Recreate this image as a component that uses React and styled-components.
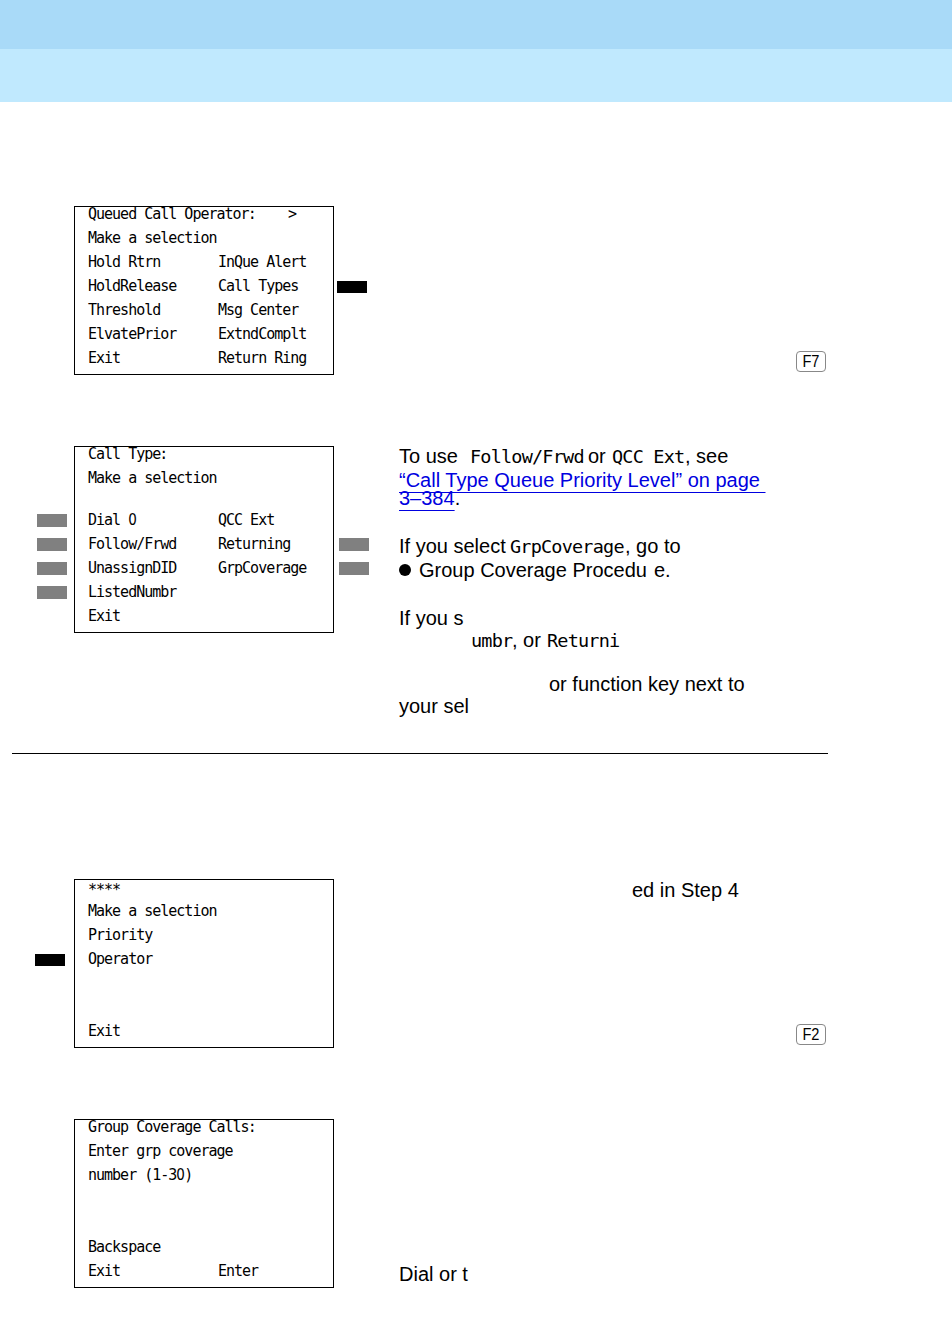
import styled, { createGlobalStyle } from "styled-components";

const GlobalStyle = createGlobalStyle`
  body {
    margin: 0;
    background-color: #fff;
    color: #000;
  }
`;

const Page = styled.div`
  width: 952px;
  height: 1342px;
  overflow: hidden;
  font-family: "Liberation Sans", Arial, sans-serif;
`;

const TopBand = styled.div`
  height: 49px;
  background-color: #a9daf8;
`;

const SubBand = styled.div`
  height: 53px;
  background-color: #c0e9fe;
`;

const Content = styled.main`
  width: 816px;
  margin-left: 12px;
  padding-top: 104px;
`;

const Step = styled.section`
  display: grid;
  grid-template-columns: 62px 260px 65px 429px;
  align-items: start;
  height: ${({ $height }) => $height || 169}px;
  margin-bottom: ${({ $after }) => $after || 0}px;
`;

const Divider = styled.div`
  height: 1px;
  margin-bottom: 125px;
  background-color: #000;
`;

const Keys = styled.div`
  display: flex;
  flex-direction: column;
  gap: 11px;
  padding: ${({ $top }) => $top || 0}px 0 0 ${({ $left }) => $left || 0}px;
`;

const Key = styled.div`
  width: 30px;
  height: ${({ $active }) => ($active ? 12 : 13)}px;
  background-color: ${({ $active }) => ($active ? "#000" : "#808080")};
`;

const Screen = styled.div`
  box-sizing: border-box;
  height: ${({ $height }) => $height || 169}px;
  padding-left: 13px;
  border: 1px solid #000;
  font-family: "DejaVu Sans Mono", monospace;
  font-size: 15px;
  letter-spacing: -1px;
`;

const Row = styled.div`
  display: grid;
  grid-template-columns: 130px 1fr;
  height: ${({ $height }) => $height || 24}px;
  line-height: 24px;
  white-space: pre;
`;

const TitleRow = styled(Row)`
  grid-template-columns: 200px 1fr;
  height: 19px;
  line-height: ${({ $low }) => ($low ? 20 : 15)}px;
`;

const Colon = styled.span`
  margin-left: -1px;
`;

const Zero = styled.span`
  display: inline-block;
  width: 8px;
  font-family: "DejaVu Sans Condensed", "DejaVu Sans", sans-serif;
`;

const Notes = styled.div`
  display: flex;
  flex-direction: column;
  font-size: 20px;
`;

const Line = styled.div`
  display: flex;
  height: 22px;
  line-height: 22px;
  margin-top: ${({ $gap }) => $gap || 0}px;
  padding-left: ${({ $indent }) => $indent || 0}px;
  white-space: pre;
  align-items: baseline;
`;

const Words = styled.span`
  flex: none;
  width: ${({ $w }) => ($w ? `${$w}px` : "auto")};
`;

const Lcd = styled(Words)`
  font-family: "DejaVu Sans Mono", monospace;
  font-size: 18.5px;
  line-height: 0;
  letter-spacing: -0.8px;
`;

const PageLink = styled(Words).attrs({ as: "a" })`
  color: #0000e0;
  text-decoration: underline 1px;
  text-underline-offset: 5px;
  text-decoration-skip-ink: none;
`;

const Bullet = styled.span`
  flex: none;
  align-self: center;
  width: 12px;
  height: 12px;
  margin-right: 8px;
  border-radius: 50%;
  background-color: #000;
`;

const KeyCap = styled.div`
  box-sizing: border-box;
  width: 30px;
  height: 21px;
  align-self: flex-end;
  margin: ${({ $top }) => $top}px 2px 0 0;
  border: 1px solid #888;
  border-radius: 4px;
  font-size: 17px;
  line-height: 20px;
  text-align: center;
`;

const KeyLabel = styled.span`
  display: inline-block;
  transform: scaleX(0.86);
`;

function FunctionKey({ name, top }) {
  return (
    <KeyCap $top={top}>
      <KeyLabel>{name}</KeyLabel>
    </KeyCap>
  );
}

export default function App() {
  return (
    <Page>
      <GlobalStyle />
      <TopBand />
      <SubBand />
      <Content>
        <Step $after={71}>
          <Keys />
          <Screen>
            <TitleRow>
              <span>
                Queued Call Operator<Colon>:</Colon>
              </span>
              <span>&gt;</span>
            </TitleRow>
            <Row>Make a selection</Row>
            <Row>
              <span>Hold Rtrn</span>
              <span>InQue Alert</span>
            </Row>
            <Row>
              <span>HoldRelease</span>
              <span>Call Types</span>
            </Row>
            <Row>
              <span>Threshold</span>
              <span>Msg Center</span>
            </Row>
            <Row>
              <span>ElvatePrior</span>
              <span>ExtndComplt</span>
            </Row>
            <Row>
              <span>Exit</span>
              <span>Return Ring</span>
            </Row>
          </Screen>
          <Keys $top={75} $left={3}>
            <Key $active />
          </Keys>
          <Notes>
            <FunctionKey name="F7" top={145} />
          </Notes>
        </Step>

        <Step $height={307}>
          <Keys $top={68} $left={25}>
            <Key />
            <Key />
            <Key />
            <Key />
          </Keys>
          <Screen $height={187}>
            <TitleRow>
              <span>
                Call Type<Colon>:</Colon>
              </span>
            </TitleRow>
            <Row>Make a selection</Row>
            <Row $height={18} />
            <Row>
              <span>
                Dial <Zero>0</Zero>
              </span>
              <span>QCC Ext</span>
            </Row>
            <Row>
              <span>Follow/Frwd</span>
              <span>Returning</span>
            </Row>
            <Row>
              <span>UnassignDID</span>
              <span>GrpCoverage</span>
            </Row>
            <Row>ListedNumbr</Row>
            <Row>Exit</Row>
          </Screen>
          <Keys $top={92} $left={5}>
            <Key />
            <Key />
          </Keys>
          <Notes>
            <Line $gap={-1}>
              <Words $w={71}>To use</Words>
              <Lcd $w={118}>Follow/Frwd</Lcd>
              <Words $w={24}>or</Words>
              <Lcd $w={73}>QCC Ext</Lcd>
              <Words>, see</Words>
            </Line>
            <Line $gap={2}>
              <PageLink>“Call Type Queue Priority Level” on page </PageLink>
            </Line>
            <Line $gap={-4}>
              <PageLink>3–384</PageLink>
              <Words>.</Words>
            </Line>
            <Line $gap={26}>
              <Words $w={111}>If you select</Words>
              <Lcd $w={115}>GrpCoverage</Lcd>
              <Words>, go to</Words>
            </Line>
            <Line $gap={2}>
              <Bullet />
              <Words $w={235}>Group Coverage Procedu</Words>
              <Words>e.</Words>
            </Line>
            <Line $gap={26}>
              <Words>If you s</Words>
            </Line>
            <Line $indent={72}>
              <Lcd $w={41}>umbr</Lcd>
              <Words $w={35}>, or</Words>
              <Lcd>Returni</Lcd>
            </Line>
            <Line $gap={22} $indent={150}>
              <Words>or function key next to</Words>
            </Line>
            <Line>
              <Words>your sel</Words>
            </Line>
          </Notes>
        </Step>

        <Divider />

        <Step $after={71}>
          <Keys $top={75} $left={23}>
            <Key $active />
          </Keys>
          <Screen>
            <TitleRow $low>****</TitleRow>
            <Row>Make a selection</Row>
            <Row>Priority</Row>
            <Row>Operator</Row>
            <Row />
            <Row />
            <Row>Exit</Row>
          </Screen>
          <Keys />
          <Notes>
            <Line $indent={233}>
              <Words>ed in Step 4</Words>
            </Line>
            <FunctionKey name="F2" top={123} />
          </Notes>
        </Step>

        <Step>
          <Keys />
          <Screen>
            <TitleRow>
              <span>
                Group Coverage Calls<Colon>:</Colon>
              </span>
            </TitleRow>
            <Row>
              <span>Enter grp coverage</span>
            </Row>
            <Row>
              <span>
                number (1-3<Zero>0</Zero>)
              </span>
            </Row>
            <Row />
            <Row />
            <Row>Backspace</Row>
            <Row>
              <span>Exit</span>
              <span>Enter</span>
            </Row>
          </Screen>
          <Keys />
          <Notes>
            <Line $gap={144}>
              <Words>Dial or t</Words>
            </Line>
          </Notes>
        </Step>
      </Content>
    </Page>
  );
}
